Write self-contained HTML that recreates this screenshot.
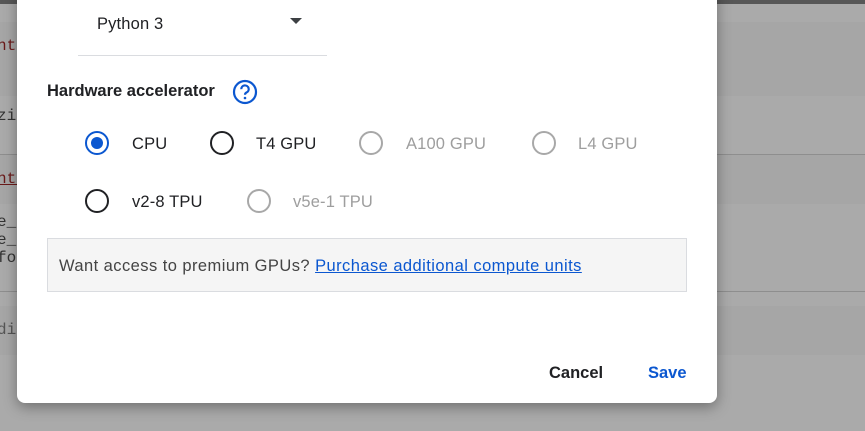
<!DOCTYPE html>
<html><head><style>
*{margin:0;padding:0;box-sizing:border-box}
body{width:865px;height:431px;overflow:hidden;position:relative;background:#aaa;font-family:"Liberation Sans",sans-serif}
.band{position:absolute;left:0;width:865px}
.dlg{position:absolute;left:17px;top:-10px;width:700px;height:413px;background:#fff;border-radius:0 0 8px 8px;box-shadow:0 4px 14px rgba(0,0,0,.35)}
.t{position:absolute;font-size:16.5px;letter-spacing:0.15px;color:#202124;white-space:nowrap}
.g{color:#9e9e9e}
.r{position:absolute;width:24px;height:24px;border-radius:50%;border:2px solid #202124}
.r.d{border-color:#a8a8a8}
.r.s{border-color:#0b57d0}
.r.s::after{content:"";position:absolute;left:4px;top:4px;width:12px;height:12px;border-radius:50%;background:#0b57d0}
.code{position:absolute;font-family:"Liberation Mono",monospace;font-size:16px;color:#333}
</style></head><body>
<div class="band" style="top:0;height:4px;background:#575757"></div>
<div class="band" style="top:22px;height:74px;background:#a6a6a6"></div>
<div class="band" style="top:154px;height:1px;background:#8e8e8e"></div>
<div class="band" style="top:155px;height:49px;background:#a6a6a6"></div>
<div class="band" style="top:291px;height:1px;background:#8e8e8e"></div>
<div class="band" style="top:306px;height:49px;background:#a6a6a6"></div>
<div class="code" style="left:-3px;top:37px;color:#6a1a1a">nte</div>
<div class="code" style="left:-3px;top:107px">zip</div>
<div class="code" style="left:-3px;top:170px;color:#6a1a1a;text-decoration:underline">nte</div>
<div class="code" style="left:-3px;top:213px;line-height:18px">e_c<br>e_c<br>fo.</div>
<div class="code" style="left:-3px;top:321px;color:#555">dir</div>

<div class="dlg">
<div class="t" style="left:80px;top:25px">Python 3</div>
<svg style="position:absolute;left:273px;top:28px" width="12" height="7"><path d="M0 0H12L6 6Z" fill="#3c4043"/></svg>
<div style="position:absolute;left:61px;top:65px;width:249px;height:1px;background:#dadce0"></div>
<div class="t" style="left:30px;top:92px;font-weight:bold;letter-spacing:0px">Hardware accelerator</div>
<svg style="position:absolute;left:215px;top:89px" width="26" height="26" viewBox="0 0 26 26"><circle cx="13" cy="13" r="11" fill="none" stroke="#0b57d0" stroke-width="2.2"/><path d="M9.3 10.2a3.7 3.7 0 1 1 5.2 3.3c-1 .5-1.5 1.1-1.5 2.3" fill="none" stroke="#0b57d0" stroke-width="2.2"/><circle cx="13" cy="19" r="1.3" fill="#0b57d0"/></svg>

<div class="r s" style="left:68px;top:141px"></div><div class="t" style="left:115px;top:145px">CPU</div>
<div class="r" style="left:193px;top:141px"></div><div class="t" style="left:239px;top:145px">T4 GPU</div>
<div class="r d" style="left:342px;top:141px"></div><div class="t g" style="left:389px;top:145px">A100 GPU</div>
<div class="r d" style="left:515px;top:141px"></div><div class="t g" style="left:561px;top:145px">L4 GPU</div>
<div class="r" style="left:68px;top:199px"></div><div class="t" style="left:115px;top:203px">v2-8 TPU</div>
<div class="r d" style="left:230px;top:199px"></div><div class="t g" style="left:276px;top:203px">v5e-1 TPU</div>

<div style="position:absolute;left:30px;top:248px;width:640px;height:54px;background:#f5f5f5;border:1px solid #dadce0"></div>
<div class="t" style="left:42px;top:267px;color:#444;letter-spacing:0.44px">Want access to premium GPUs? <span style="color:#0b57d0;text-decoration:underline">Purchase additional compute units</span></div>

<div class="t" style="left:532px;top:374px;font-weight:bold;color:#202124;letter-spacing:0">Cancel</div>
<div class="t" style="left:631px;top:374px;font-weight:bold;color:#0b57d0;letter-spacing:0">Save</div>
</div>
</body></html>
